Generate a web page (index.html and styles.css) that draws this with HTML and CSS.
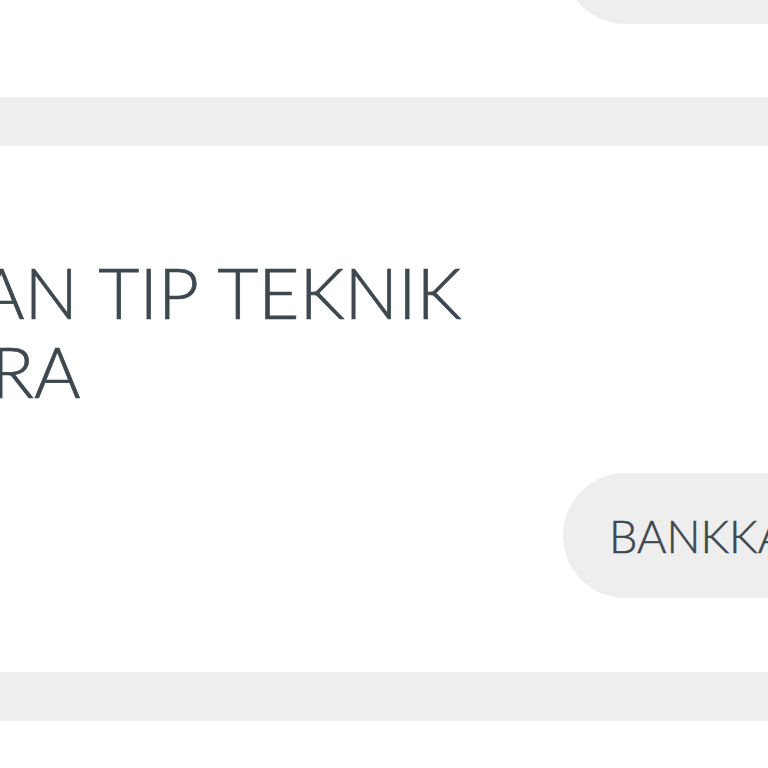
FILE: index.html
```html
<!DOCTYPE html>
<html lang="id">
<head>
  <meta charset="UTF-8">
  <title>Tip Teknik Kamera</title>
  <link rel="stylesheet" href="styles.css">
</head>
<body>

  <section class="card card-top">
    <div class="tags">
      <span class="tag">KAMERA</span>
    </div>
  </section>

  <div class="divider"></div>

  <section class="card card-post">
    <h2 class="post-title">AN TIP TEKNIK<br>RA</h2>
    <div class="tags">
      <span class="tag">BANKKAMERA</span>
    </div>
  </section>

  <div class="divider"></div>

  <section class="card card-bottom"></section>

</body>
</html>
```

FILE: styles.css
```css
* {
  box-sizing: border-box;
}

html, body {
  margin: 0;
  padding: 0;
  background: #fff;
  overflow: hidden;
}

body {
  width: 768px;
  height: 768px;
  font-family: 'Lato', 'Liberation Sans', sans-serif;
  color: #3d484f;
}

.card {
  background: #fff;
}

.card-top {
  height: 97px;
}

.card-top .tag {
  margin-top: -101px;
}

.divider {
  height: 49px;
  background: #eeeeee;
}

.card-post {
  height: 526px;
  padding-top: 106px;
}

/* the title starts left of the frame, so only its tail shows */
.post-title {
  margin: 0 0 0 -9px;
  text-indent: -13px;
  font-size: 71px;
  font-weight: 300;
  line-height: 79px;
  word-spacing: 3px;
  white-space: nowrap;
  -webkit-text-stroke: 0.7px #3d484f;
}

.tags {
  display: flex;
  padding-left: 563px;
}

.card-post .tags {
  margin-top: 63px;
}

.tag {
  display: flex;
  align-items: center;
  flex-shrink: 0;
  height: 125px;
  padding: 0 60px 0 46px;
  border-radius: 63px;
  background: #eeeeee;
  font-size: 45px;
  font-weight: 300;
  white-space: nowrap;
  -webkit-text-stroke: 0.5px #3d484f;
}

.card-bottom {
  height: 48px;
}
```
